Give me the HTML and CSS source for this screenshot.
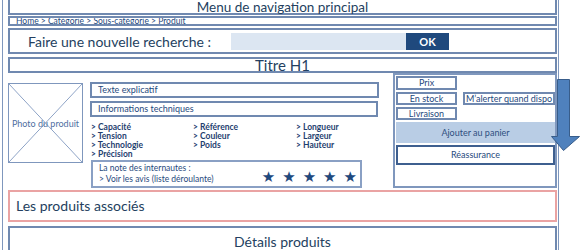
FILE: index.html
```html
<!DOCTYPE html>
<html lang="fr">
  <head>
    <meta charset="UTF-8" />
    <meta name="viewport" content="width=device-width, initial-scale=1.0" />
    <title>Fiche produit - maquette</title>

    <link rel="stylesheet" href="styles.css">
  </head>

  <body>
    <div class="page">
      <!-- menu + fil d'ariane -->
      <div class="box menu">Menu de navigation principal</div>
      <div class="box crumbs">
        <a href="#">Home &gt; Catégorie &gt; Sous-catégorie &gt; Produit</a>
      </div>

      <div class="box search">
        <span class="search-label">Faire une nouvelle recherche :</span>
        <div class="search-field"></div>
        <button class="search-btn">OK</button>
      </div>

      <div class="box title">Titre H1</div>

      <!-- fiche -->
      <div class="product">
        <div class="box photo">Photo du produit</div>

        <div class="info">
          <div class="box line">Texte explicatif</div>
          <div class="box line line-2">Informations techniques</div>

          <div class="specs">
            <ul>
              <li>&gt; Capacité</li>
              <li>&gt; Tension</li>
              <li>&gt; Technologie</li>
              <li>&gt; Précision</li>
            </ul>
            <ul>
              <li>&gt; Référence</li>
              <li>&gt; Couleur</li>
              <li>&gt; Poids</li>
            </ul>
            <ul>
              <li>&gt; Longueur</li>
              <li>&gt; Largeur</li>
              <li>&gt; Hauteur</li>
            </ul>
          </div>

          <div class="box rating">
            <div class="rating-text">
              <div>La note des internautes :</div>
              <div>&gt; Voir les avis (liste déroulante)</div>
            </div>
            <div class="stars">
              <span>★</span><span>★</span><span>★</span><span>★</span><span>★</span>
            </div>
          </div>
        </div>

        <div class="box buy">
          <div class="buy-grid">
            <div class="box tag">Prix</div>
            <div class="box tag">En stock</div>
            <div class="box tag">Livraison</div>
            <div class="box tag alert">M’alerter quand dispo</div>
          </div>
          <div class="cart">Ajouter au panier</div>
          <div class="box reassure">Réassurance</div>
        </div>
      </div>

      <div class="related">Les produits associés</div>
      <div class="box details">Détails produits</div>
    </div>

    <svg class="arrow" width="30" height="74" viewBox="0 0 30 74">
      <path d="M6.5 0.5 H18.5 V57.5 H28.5 L12.5 71.5 L0.5 57.5 H6.5 Z" fill="#4f81bd" stroke="#385d8a" stroke-width="1" />
    </svg>
  </body>
</html>
```

FILE: styles.css
```css
body {
  margin: 0;
  padding: 0;
  position: relative;
  height: 250px;
  overflow: hidden;
  background: #fff;
  font-family: "Lato", "Open Sans", sans-serif;
  color: #1f497d;
}

.page {
  margin-left: 2px;
  width: 549px;
  height: 300px;
  padding: 0 1px 0 5px;
  border-left: 1px solid #7f97bd;
  border-right: 1px solid #7f97bd;
}

.box {
  box-sizing: border-box;
  border: 2px solid #7089b0;
  background: #fff;
}

.menu {
  height: 15px;
  border-top: none;
  font-size: 13.5px;
  line-height: 15px;
  text-align: center;
  color: #243f60;
}

.crumbs {
  margin-top: 1px;
  height: 10px;
  padding-left: 6px;
  font-size: 8.5px;
  line-height: 7px;
  overflow: hidden;
}

.crumbs a {
  color: #1f497d;
}

.search {
  margin-top: 2px;
  height: 26px;
  display: flex;
  align-items: center;
  padding-left: 18px;
}

.search-label {
  width: 203px;
  font-size: 14px;
  color: #243f60;
}

.search-field {
  width: 175px;
  height: 17px;
  background: #dce6f2;
}

.search-btn {
  width: 43px;
  height: 17px;
  border: none;
  padding: 0;
  background: #1f497d;
  color: #fff;
  font-family: "Lato", sans-serif;
  font-weight: bold;
  font-size: 11px;
}

.title {
  margin-top: 3px;
  height: 16px;
  font-size: 15px;
  line-height: 12px;
  text-align: center;
  color: #243f60;
}

/* fiche produit */

.product {
  display: flex;
  align-items: flex-start;
  height: 115px;
}

.photo {
  margin-top: 10px;
  width: 75px;
  height: 80px;
  display: flex;
  align-items: center;
  justify-content: center;
  font-size: 9px;
  color: #4f6f9f;
  border-width: 1px;
  border-color: #7f97bd;
  background:
    linear-gradient(to top right, transparent calc(50% - 0.7px), #8aa0c4, transparent calc(50% + 0.7px)),
    linear-gradient(to bottom right, transparent calc(50% - 0.7px), #8aa0c4, transparent calc(50% + 0.7px));
}

.info {
  margin-left: 7px;
  margin-top: 9px;
  width: 290px;
}

.line {
  width: 289px;
  height: 16px;
  padding-left: 6px;
  font-size: 9px;
  line-height: 12px;
}

.line-2 {
  width: 288px;
  margin-top: 3px;
}

.specs {
  display: grid;
  grid-template-columns: 102px 103px 1fr;
  margin-top: 6px;
  padding-left: 1px;
  height: 37px;
}

ul {
  list-style: none;
  margin: 0;
  padding: 0;
}

li {
  font-size: 8.5px;
  line-height: 9px;
  font-weight: bold;
  color: #1f3f6f;
}

.rating {
  margin-left: 1px;
  width: 271px;
  height: 28px;
  display: flex;
  align-items: center;
  justify-content: space-between;
  padding: 0 3px 0 6px;
  border-color: #8aa0c4;
}

.rating-text {
  font-size: 8.5px;
  line-height: 11px;
}

.stars {
  display: flex;
  gap: 7px;
  margin-top: 5px;
  font-family: "DejaVu Sans", sans-serif;
  font-size: 15px;
  color: #1f497d;
}

/* colonne achat */

.buy {
  margin-left: auto;
  width: 164px;
  height: 115px;
  padding: 1px 0 0 1px;
  border-color: #7f97bd;
}

.buy-grid {
  display: grid;
  grid-template-columns: 61px 1fr;
  grid-template-rows: 14px 13px 13px;
  column-gap: 6px;
  row-gap: 2px;
}

.tag {
  grid-column: 1;
  font-size: 9px;
  line-height: 10px;
  text-align: center;
}

.alert {
  grid-column: 2;
  grid-row: 2;
}

.cart {
  margin-top: 2px;
  height: 21px;
  background: #b9cde5;
  font-size: 9px;
  line-height: 21px;
  text-align: center;
  color: #2f4f7f;
}

.reassure {
  margin-top: 2px;
  height: 20px;
  font-size: 9px;
  line-height: 16px;
  text-align: center;
  border-color: #3e5f8f;
}

.related {
  box-sizing: border-box;
  margin-top: 2px;
  height: 32px;
  padding-left: 6px;
  border: 2px solid #eaa3a3;
  font-size: 14px;
  line-height: 28px;
  color: #243f60;
}

.details {
  margin-top: 4px;
  height: 40px;
  font-size: 14px;
  line-height: 28px;
  text-align: center;
  color: #243f60;
}

.arrow {
  position: absolute;
  left: 551px;
  top: 79px;
}
```
